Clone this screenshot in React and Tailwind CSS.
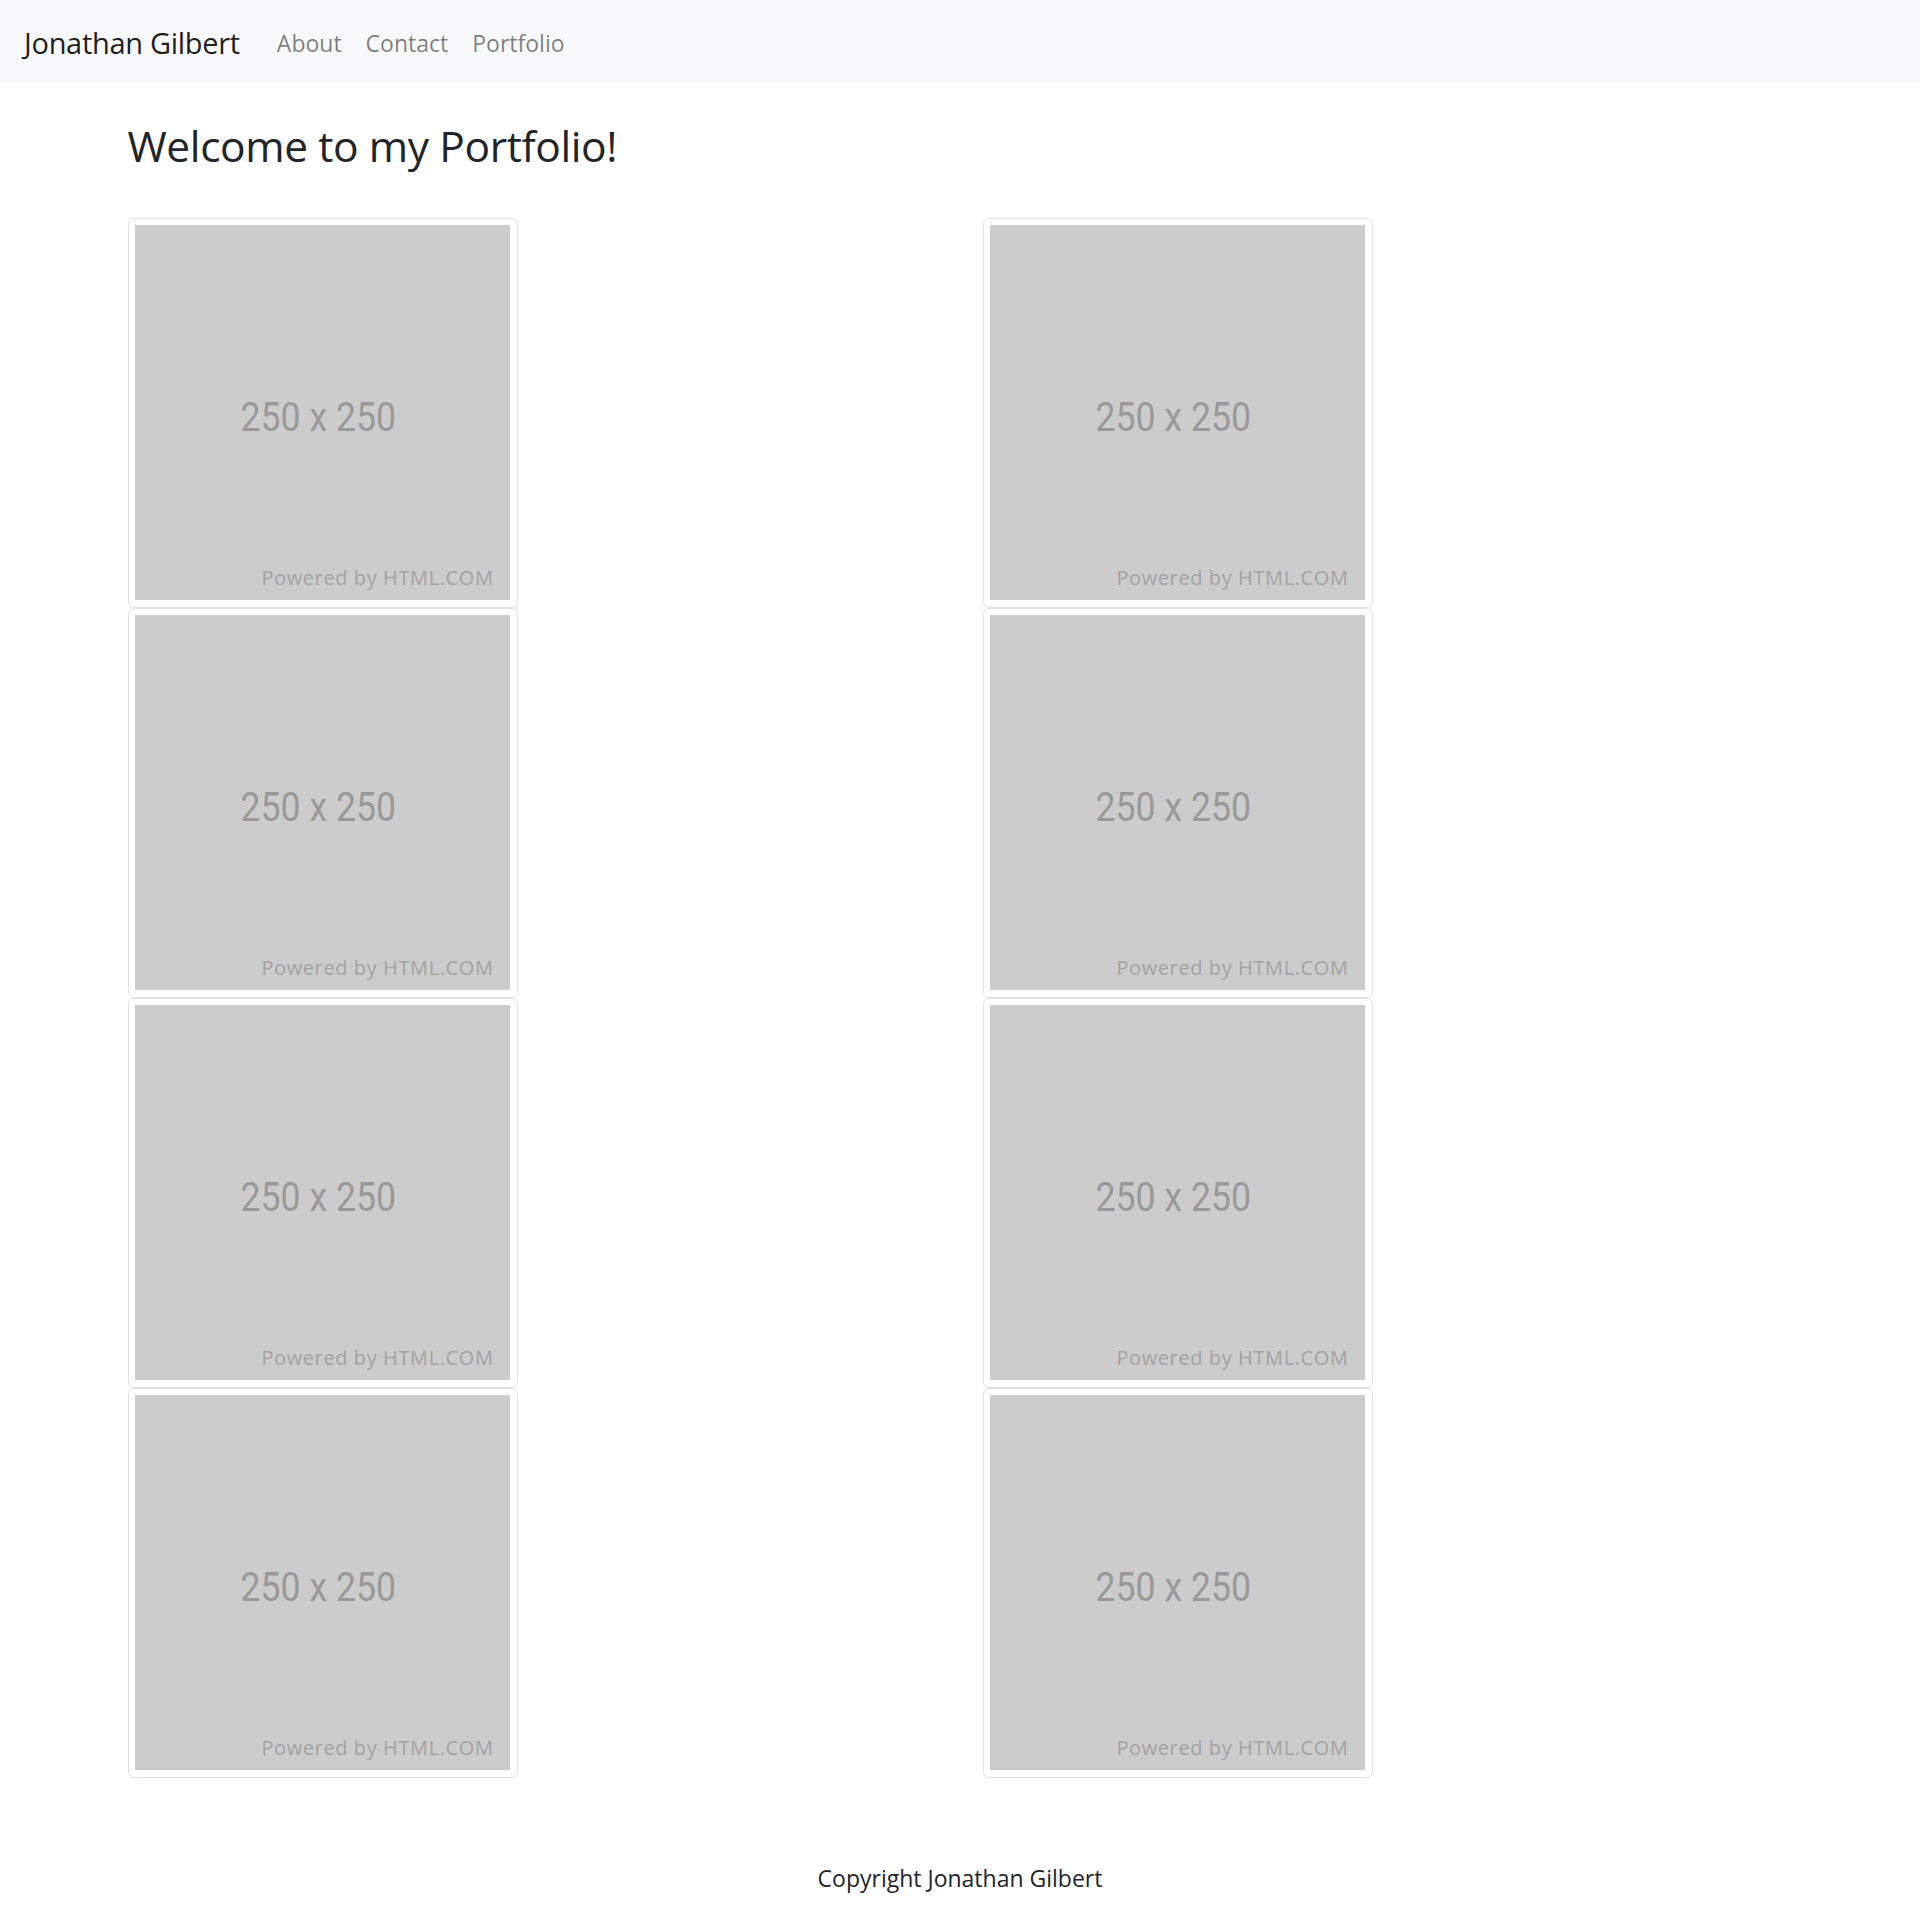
import React from 'react';

const Placeholder = () => (
  <div className="relative w-[375px] h-[375px] bg-[#cccccc] overflow-hidden">
    <div className="absolute inset-0 flex items-center justify-center pr-[8px] pt-[11px]">
      <span className="inline-block scale-x-[0.89] text-[40px] leading-none text-[#999999] font-['Roboto','Liberation_Sans',sans-serif]">
        250 x 250
      </span>
    </div>
    <span className="absolute right-[16px] bottom-[12px] text-[20px] leading-none text-[#a3a3a3] font-['Open_Sans','Noto_Sans',sans-serif] tracking-[0.6px]">
      Powered by HTML.COM
    </span>
  </div>
);

const Thumb = () => (
  <div className="w-[390px] h-[390px] p-[6px] bg-white border-[1.5px] border-[#dee2e6] rounded-[6px]">
    <Placeholder />
  </div>
);

export default function App() {
  const cards = [0, 1, 2, 3];

  return (
    <div className="min-h-[1925px] bg-white text-[#212529] font-['Open_Sans','Noto_Sans',sans-serif]">
      <nav className="h-[83px] bg-[#f8f9fa] flex items-center pl-[24px] pt-[3px]">
        <a className="text-[29px] text-black/90 mr-[37px] tracking-[-0.3px]">Jonathan Gilbert</a>
        <ul className="flex items-center gap-[24px] text-[23px] text-black/50">
          <li>About</li>
          <li>Contact</li>
          <li>Portfolio</li>
        </ul>
      </nav>

      <main className="w-[1710px] ml-[105px] px-[22.5px]">
        <h2 className="pt-[37px] pb-[47px] text-[42.5px] font-medium leading-[1.2] tracking-[-0.4px]">
          Welcome to my Portfolio!
        </h2>
        <div className="grid grid-cols-2 gap-x-[45px]">
          <div className="flex flex-col">
            {cards.map((c) => (
              <Thumb key={c} />
            ))}
          </div>
          <div className="flex flex-col">
            {cards.map((c) => (
              <Thumb key={c} />
            ))}
          </div>
        </div>
      </main>

      <footer className="pt-[82px] text-center text-[23px] leading-[36px]">
        Copyright Jonathan Gilbert
      </footer>
    </div>
  );
}
